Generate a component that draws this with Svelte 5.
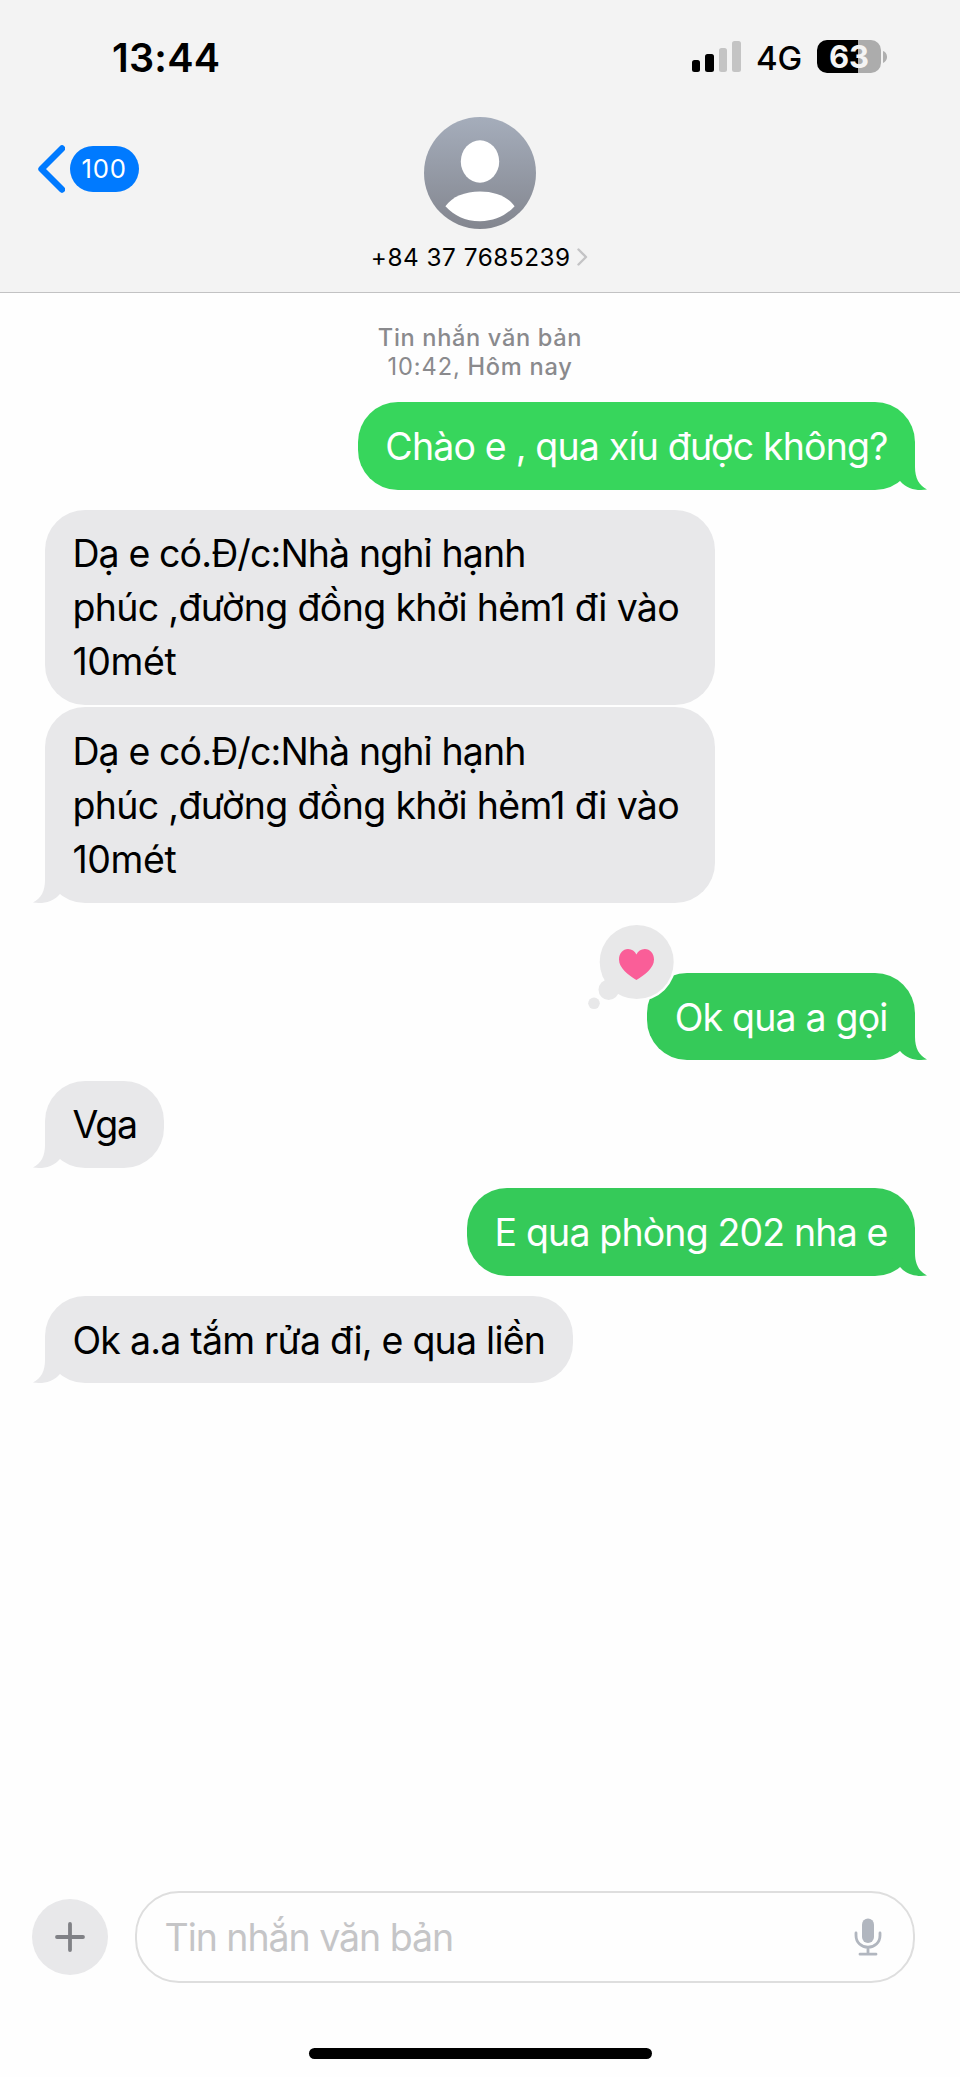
<script>
  const address = [
    { text: 'Dạ e có.Đ/c:Nhà nghỉ hạnh', spacing: -0.88 },
    { text: 'phúc ,đường đồng khởi hẻm1 đi vào', spacing: -0.66 },
    { text: '10mét', spacing: -0.4 }
  ];

  const messages = [
    { side: 'sent', tone: 'bright', tail: true, gap: 0, lines: [{ text: 'Chào e , qua xíu được không?', spacing: -0.82 }] },
    { side: 'received', gap: 20, wide: true, lines: address },
    { side: 'received', tail: true, gap: 2.6, wide: true, lines: address },
    { side: 'sent', tail: true, gap: 70.4, heart: true, lines: [{ text: 'Ok qua a gọi', spacing: -0.82 }] },
    { side: 'received', tail: true, gap: 20.2, lines: [{ text: 'Vga', spacing: -1.2 }] },
    { side: 'sent', tail: true, gap: 20.2, lines: [{ text: 'E qua phòng 202 nha e', spacing: -0.85 }] },
    { side: 'received', tail: true, gap: 20.2, lines: [{ text: 'Ok a.a tắm rửa đi, e qua liền', spacing: -0.77 }] }
  ];

  const bars = [12, 17.5, 24, 30.5];
</script>

<div class="phone">
  <header>
    <div class="status">
      <span class="clock">13:44</span>
      <div class="indicators">
        <div class="signal">
          {#each bars as height, i}
            <i class:on={i < 2} style:height="{height}px"></i>
          {/each}
        </div>
        <span class="network">4G</span>
        <div class="battery"><span>63</span></div>
        <svg class="nub" width="4" height="12" viewBox="0 0 4 12"><path d="M0 0C5.4 2 5.4 10 0 12Z" fill="#b0b0b0" /></svg>
      </div>
    </div>

    <div class="contact">
      <div class="back">
        <svg width="28" height="48" viewBox="0 0 28 48"><path d="M25 3.5 4.5 24 25 44.5" fill="none" stroke="#007aff" stroke-width="6.4" stroke-linecap="round" stroke-linejoin="round" /></svg>
        <span class="count">100</span>
      </div>
      <svg class="avatar" width="112" height="112" viewBox="0 0 112 112">
        <defs>
          <linearGradient id="shade" x1="0" y1="0" x2="0" y2="1">
            <stop offset="0" stop-color="#a5adbb" />
            <stop offset="1" stop-color="#83868f" />
          </linearGradient>
        </defs>
        <circle cx="56" cy="56" r="56" fill="url(#shade)" />
        <ellipse cx="56" cy="44.5" rx="19.2" ry="21.2" fill="#fff" />
        <path d="M21.4 89.2C28 79.5 41 74.4 56 74.4S84 79.5 90.6 89.2C82 98.5 71 104.2 56 104.2S30 98.5 21.4 89.2Z" fill="#fff" />
      </svg>
    </div>

    <div class="name">
      <span>+84 37 7685239</span>
      <svg width="11" height="18" viewBox="0 0 11 18"><path d="M1.5 1.5 9 9 1.5 16.5" fill="none" stroke="#c3c3c5" stroke-width="2.4" stroke-linecap="round" stroke-linejoin="round" /></svg>
    </div>
  </header>

  <main>
    <div class="stamp">
      <div class="kind">Tin nhắn văn bản</div>
      <div><span class="time">10:42,</span> <span class="day">Hôm nay</span></div>
    </div>

    {#each messages as m}
      <div class="bubble {m.side} {m.tone ?? ''}" class:wide={m.wide} style:margin-top="{m.gap}px">
        {#each m.lines as line}
          <div class="line" style:letter-spacing="{line.spacing}px">{line.text}</div>
        {/each}
        {#if m.tail}
          <svg class="tail" width="40" height="44" viewBox="0 0 40 44">
            <path d="M5 0H28V21C28 32 32 39.5 40 43.5C30 45 20 43 13.3 35.2L5 26Z" fill="currentColor" />
          </svg>
        {/if}
        {#if m.heart}
          <svg class="reaction" width="90" height="92" viewBox="0 0 90 92">
            <circle cx="50.7" cy="44" r="39.5" fill="#fefefe" />
            <g fill="#e8e8e9">
              <circle cx="50.7" cy="44" r="37" />
              <circle cx="22.7" cy="71.8" r="10.2" />
              <circle cx="8" cy="85.3" r="5.8" />
            </g>
            <path d="M50.4 62C42 56.5 33 50 33 41.4C33 35.5 37 31 42 31C45.9 31 48.9 33.2 50.4 36.6C51.9 33.2 54.9 31 58.8 31C64 31 68 35.5 68 41.4C68 50 59 56.5 50.4 62Z" fill="#fa5e98" />
          </svg>
        {/if}
      </div>
    {/each}
  </main>

  <footer>
    <div class="compose">
      <div class="add">
        <svg width="30" height="30" viewBox="0 0 30 30"><path d="M15 2V28M2 15H28" stroke="#808186" stroke-width="3.8" stroke-linecap="round" /></svg>
      </div>
      <div class="field">
        <span>Tin nhắn văn bản</span>
        <svg width="28" height="38" viewBox="0 0 28 38">
          <rect x="8" y="0.5" width="12" height="24.5" rx="6" fill="#b1b6bf" />
          <path d="M2 15V17.5C2 24.5 7.5 29.2 14 29.2S26 24.5 26 17.5V15M14 29.5V36M6 36.2H22" fill="none" stroke="#b1b6bf" stroke-width="2.8" stroke-linecap="round" />
        </svg>
      </div>
    </div>
    <div class="home"></div>
  </footer>
</div>

<style>
  :global(body) { background: #fefefe; }
  .phone {
    width: 960px;
    height: 2077px;
    display: flex;
    flex-direction: column;
    overflow: hidden;
    background: #fefefe;
    color: #000;
    font-family: Inter, sans-serif;
    white-space: nowrap;
  }
  svg { display: block; flex: none; }

  header {
    box-sizing: border-box;
    height: 293px;
    flex: none;
    background: #f3f3f3;
    border-bottom: 1px solid #c2c2c3;
  }
  .status {
    box-sizing: border-box;
    height: 116.5px;
    padding: 33px 73px 0 112px;
    display: flex;
    justify-content: space-between;
    align-items: flex-start;
  }
  .clock { font-size: 39.5px; font-weight: 600; line-height: 50px; letter-spacing: 0.24px; }
  .indicators { display: flex; align-items: flex-start; padding-top: 6.5px; }
  .signal { display: flex; align-items: flex-end; gap: 4.9px; height: 32px; margin-right: 15.5px; }
  .signal i { width: 8.5px; border-radius: 2.5px; background: #c4c4c4; }
  .signal i.on { background: #000; }
  .network { width: 61px; font-size: 33px; font-weight: 500; line-height: 40px; margin-top: -1.5px; letter-spacing: -0.16px; }
  .battery {
    width: 64px;
    height: 33.5px;
    border-radius: 10px;
    background: linear-gradient(90deg, #000 0 40.7px, #acacac 40.7px);
    color: #f4f4f4;
    font-size: 31px;
    font-weight: 700;
    line-height: 33px;
    text-align: center;
  }
  .nub { margin: 11px 0 0 2px; }

  .contact { position: relative; display: flex; justify-content: center; height: 112px; }
  .back { position: absolute; left: 37px; top: 28px; display: flex; align-items: center; gap: 4.5px; height: 48px; }
  .count {
    width: 69.5px;
    height: 46px;
    border-radius: 23px;
    background: #007aff;
    color: #fff;
    font-size: 25.7px;
    line-height: 46px;
    text-align: center;
    letter-spacing: 0.8px;
  }
  .name { display: flex; justify-content: center; align-items: center; gap: 6.5px; height: 30px; margin-top: 13.5px; padding-right: 1px; }
  .name span { font-size: 24.3px; letter-spacing: 0.54px; }

  main { flex: 1; display: flex; flex-direction: column; padding: 30px 45px 0; }
  .stamp { height: 79.2px; text-align: center; font-size: 23.6px; line-height: 29.3px; color: #8a8a8d; }
  .kind { font-weight: 500; letter-spacing: 0.66px; }
  .time { letter-spacing: 0.95px; }
  .day { font-weight: 500; letter-spacing: 0.75px; }

  .bubble {
    position: relative;
    box-sizing: border-box;
    padding: 17.9px 27.4px 15.6px;
    border-radius: 40px;
    font-size: 37.5px;
    line-height: 53.9px;
  }
  .sent { align-self: flex-end; background: #35ca59; color: #35ca59; }
  .bright { background: #37d65c; color: #37d65c; }
  .sent .line { color: #fff; }
  .received { align-self: flex-start; background: #e8e8ea; color: #e8e8ea; }
  .received .line { color: #000; }
  .wide { width: 670px; }
  .tail { position: absolute; right: -12px; bottom: 0; }
  .received .tail { right: auto; left: -12px; transform: scaleX(-1); }
  .reaction { position: absolute; left: -60.9px; top: -54.9px; }

  footer { flex: none; height: 186px; }
  .compose { display: flex; align-items: center; gap: 27.5px; height: 92px; padding: 0 45px 0 31.5px; }
  .add { width: 76px; height: 76px; flex: none; border-radius: 50%; background: #e8e8ea; display: grid; place-items: center; }
  .field {
    flex: 1;
    box-sizing: border-box;
    height: 92px;
    border: 2px solid #dedede;
    border-radius: 44px;
    padding: 0 31px 0 27.5px;
    display: flex;
    align-items: center;
    justify-content: space-between;
    font-size: 37.5px;
    color: #c5c5c7;
  }
  .field span { letter-spacing: -1.04px; }
  .home { width: 343px; height: 11px; margin: 65px auto 0; border-radius: 6px; background: #000; }
</style>
